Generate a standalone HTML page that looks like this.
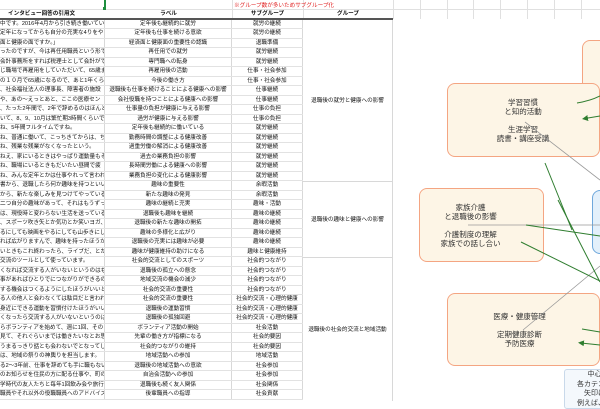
<!DOCTYPE html>
<html><head><meta charset="utf-8"><style>
*{margin:0;padding:0;box-sizing:border-box}
body{width:600px;height:400px;overflow:hidden;background:#fff;position:relative;font-family:"Liberation Sans","Noto Sans CJK JP",sans-serif;color:#111}
.abs{position:absolute}
#rows{position:absolute;left:0;top:19.5px;width:303px}
.r{display:flex;height:9.5px;border-bottom:1px solid #e2e2e2;font-size:5.6px;line-height:9px}
.r div{white-space:nowrap;overflow:hidden;border-right:1px solid #d8d8d8}
.a{width:105px;text-align:left}
.b{width:127px;text-align:center}
.c{width:71px;text-align:center}
.g{position:absolute;left:303px;width:90px;background:#fff;border-right:1px solid #d8d8d8;border-bottom:1px solid #d8d8d8;font-size:5.6px;display:flex;align-items:center;justify-content:center;white-space:nowrap}
.box{position:absolute;background:#fdf5e6;border:1px solid #f4a582;border-radius:8px;font-size:7.5px;color:#333;text-align:center;line-height:9px}
.vl{position:absolute;top:0;height:19px;width:1px;background:#e0e0e0}
</style></head><body>
<div class="abs" style="left:0;top:9px;width:600px;height:1px;background:#e0e0e0"></div>
<div class="vl" style="left:232px"></div><div class="vl" style="left:303px"></div><div class="vl" style="left:393px"></div>
<div class="vl" style="left:420px"></div><div class="vl" style="left:447px"></div><div class="vl" style="left:473px"></div><div class="vl" style="left:500px"></div><div class="vl" style="left:527px"></div><div class="vl" style="left:554px"></div><div class="vl" style="left:581px"></div>
<div class="abs" style="left:104px;top:0;width:1.5px;height:8px;background:#1e8e3e"></div>
<div class="abs" style="left:103px;top:7px;width:3px;height:3px;background:#1e8e3e"></div>
<div class="abs" style="left:234px;top:1px;font-size:5.6px;color:#e02020;white-space:nowrap">※グループ数が多いためサブグループ化</div>
<div class="abs" style="left:0;top:10px;width:393px;height:8px;font-size:5.6px;line-height:8px;font-weight:bold;white-space:nowrap">
<span class="abs" style="left:8px">インタビュー回答の引用文</span>
<span class="abs" style="left:105px;width:127px;text-align:center">ラベル</span>
<span class="abs" style="left:232px;width:71px;text-align:center">サブグループ</span>
<span class="abs" style="left:303px;width:90px;text-align:center">グループ</span>
</div>
<div class="abs" style="left:0;top:18px;width:393px;height:1.5px;background:#555"></div>

<div id="rows">
<div class="r"><div class="a">中です。2016年4月から引き続き働いてい</div><div class="b">定年後も継続的に就労</div><div class="c">就労の継続</div></div>
<div class="r"><div class="a">定年になってからも自分の充実な4りをやき</div><div class="b">定年後も仕事を続ける意欲</div><div class="c">就労の継続</div></div>
<div class="r"><div class="a">面と健康の面ですか。」</div><div class="b">経済面と健康面の重要性の認識</div><div class="c">退職準備</div></div>
<div class="r"><div class="a">ったのですが、今は再任用職員という形で</div><div class="b">再任用での就労</div><div class="c">就労継続</div></div>
<div class="r"><div class="a">会計事務所をすれば税理士として会計ができ</div><div class="b">専門職への転身</div><div class="c">就労継続</div></div>
<div class="r"><div class="a">じ職場で再雇用をしていただいて、65歳ま</div><div class="b">再雇用後の活動</div><div class="c">仕事・社会参加</div></div>
<div class="r"><div class="a">の１０月で65歳になるので、あと1年くらい</div><div class="b">今後の働き方</div><div class="c">仕事・社会参加</div></div>
<div class="r"><div class="a">、社会福祉法人の理事長、障害者の施設</div><div class="b">退職後も仕事を続けることによる健康への影響</div><div class="c">仕事継続</div></div>
<div class="r"><div class="a">や、あの～えっとあと、ここの医療セン</div><div class="b">会社役職を持つことによる健康への影響</div><div class="c">仕事継続</div></div>
<div class="r"><div class="a">、たった2年間で、2年で辞めるのはほんと</div><div class="b">仕事量の負担が健康に与える影響</div><div class="c">仕事の負担</div></div>
<div class="r"><div class="a">いて、8、9、10月は繁忙期3時間くらいで</div><div class="b">過労が健康に与える影響</div><div class="c">仕事の負担</div></div>
<div class="r"><div class="a">ね、5年間フルタイムですね。</div><div class="b">定年後も継続的に働いている</div><div class="c">就労継続</div></div>
<div class="r"><div class="a">ね、普通に働いて、こっちきてからは、ち</div><div class="b">勤務時間の調整による健康改善</div><div class="c">就労継続</div></div>
<div class="r"><div class="a">ね、残業な残業がなくなったという。</div><div class="b">過重労働の解消による健康改善</div><div class="c">就労継続</div></div>
<div class="r"><div class="a">ねえ、家にいるときはやっぱり運動量もそ</div><div class="b">過去の業務負担の影響</div><div class="c">就労継続</div></div>
<div class="r"><div class="a">ね、職場にいるときもだいたい昼間で疲</div><div class="b">長時間労働による健康への影響</div><div class="c">就労継続</div></div>
<div class="r"><div class="a">ね、みんな定年とかは仕事やれって言われ</div><div class="b">業務負担の変化による健康影響</div><div class="c">就労継続</div></div>
<div class="r"><div class="a">書から、退職したら何か趣味を持つといい</div><div class="b">趣味の重要性</div><div class="c">余暇活動</div></div>
<div class="r"><div class="a">から、新たな楽しみを見つけてやっている。</div><div class="b">新たな趣味の発見</div><div class="c">余暇活動</div></div>
<div class="r"><div class="a">二つ自分の趣味があって、それはもうずっと</div><div class="b">趣味の継続と充実</div><div class="c">趣味・活動</div></div>
<div class="r"><div class="a">は、現役時と変わらない生活を送っている。</div><div class="b">退職後も趣味を継続</div><div class="c">趣味の継続</div></div>
<div class="r"><div class="a">、スポーツ吹き矢とか気功とか笑いヨガ、</div><div class="b">退職後の新たな趣味の開拓</div><div class="c">趣味の継続</div></div>
<div class="r"><div class="a">るにしても映画をやるにしても山歩きにし</div><div class="b">趣味の多様化と広がり</div><div class="c">趣味の継続</div></div>
<div class="r"><div class="a">れば広がりますんで、趣味を持ったほうが</div><div class="b">退職後の充実には趣味が必要</div><div class="c">趣味の継続</div></div>
<div class="r"><div class="a">いときもこれ終わったら、ライブだ、とか</div><div class="b">趣味が健康維持の助けになる</div><div class="c">趣味と健康維持</div></div>
<div class="r"><div class="a">交流のツールとして使っています。</div><div class="b">社会的交流としてのスポーツ</div><div class="c">社会的つながり</div></div>
<div class="r"><div class="a">くなれば交流する人がいないというのはも</div><div class="b">退職後の孤立への懸念</div><div class="c">社会的つながり</div></div>
<div class="r"><div class="a">事があればひとりでにつながりができるの</div><div class="b">地域交流の機会の減少</div><div class="c">社会的つながり</div></div>
<div class="r"><div class="a">する機会はつくるようにしたほうがいいと</div><div class="b">社会的交流の重要性</div><div class="c">社会的つながり</div></div>
<div class="r"><div class="a">る人の他人と会わなくては駄目だと言われた</div><div class="b">社会的交流の重要性</div><div class="c">社会的交流・心理的健康</div></div>
<div class="r"><div class="a">身近にできる運動を習慣付けたほうがいい</div><div class="b">退職後の運動習慣</div><div class="c">社会的交流・心理的健康</div></div>
<div class="r"><div class="a">くなったら交流する人がいないというのは</div><div class="b">退職後の孤独回避</div><div class="c">社会的交流・心理的健康</div></div>
<div class="r"><div class="a">らボランティアを始めて、週に1回、その</div><div class="b">ボランティア活動の開始</div><div class="c">社会活動</div></div>
<div class="r"><div class="a">見て、それぐらいまでは働きたいなとお思</div><div class="b">先輩の働き方が指標になる</div><div class="c">社会的要因</div></div>
<div class="r"><div class="a">うまるっきり話とも会わないでとなってし</div><div class="b">社会的つながりの維持</div><div class="c">社会的要因</div></div>
<div class="r"><div class="a">は、地域の祭りの神輿りを担当します。</div><div class="b">地域活動への参加</div><div class="c">地域活動</div></div>
<div class="r"><div class="a">る2～3年前、仕事を辞めても手に職もない</div><div class="b">退職後の地域活動への意欲</div><div class="c">社会参加</div></div>
<div class="r"><div class="a">のお知らせを住民の方に配る仕事や、町の</div><div class="b">自治会活動への参加</div><div class="c">社会参加</div></div>
<div class="r"><div class="a">学時代の友人たちと毎年1回飲み会や旅行</div><div class="b">退職後も続く友人関係</div><div class="c">社会関係</div></div>
<div class="r"><div class="a">職員やそれ以外の役職職員へのアドバイス</div><div class="b">後輩職員への指導</div><div class="c">社会貢献</div></div>
</div>
<div class="g" style="top:19.5px;height:162px">退職後の就労と健康への影響</div>
<div class="g" style="top:181.5px;height:76px">退職後の趣味と健康への影響</div>
<div class="g" style="top:257.5px;height:143px;border-bottom:none">退職後の社会的交流と地域活動</div>

<div class="box" style="left:582px;top:40px;width:40px;height:80px"></div>
<div class="box" style="left:447px;top:83px;width:153px;height:74px;padding-top:14px">
<div style="margin-left:-1px;width:152px">学習習慣<br>と知的活動<br><br>生涯学習<br>読書・講座受講</div></div>
<div class="box" style="left:592px;top:190px;width:30px;height:64px;background:#e3f0fb;border-color:#6fa8dc"></div>
<div class="box" style="left:419px;top:188px;width:125px;height:74px;padding-top:14px">
<div style="margin-left:-22px">家族介護<br>と退職後の影響<br><br>介護制度の理解<br>家族での話し合い</div></div>
<div class="box" style="left:447px;top:293px;width:153px;height:73px;padding-top:18px">
<div style="margin-left:-8px">医療・健康管理<br><br>定期健康診断<br>予防医療</div></div>
<div class="box" style="left:564px;top:369px;width:70px;height:40px;background:#f4f8fc;border-color:#c9d9ea;border-radius:3px;font-size:7px;line-height:9.5px;padding-top:0">
<div style="margin-left:-9px;white-space:nowrap">中心<br>各カテゴリ<br>矢印は<br>例えば、経</div></div>
<svg class="abs" style="left:0;top:0" width="600" height="400" viewBox="0 0 600 400">
<defs><marker id="ar" markerWidth="6" markerHeight="6" refX="3" refY="3" orient="auto"><path d="M0,0 L6,3 L0,6 z" fill="#2f7d2f"/></marker></defs>
<g stroke="#999" stroke-width="0.8" fill="none">
<line x1="525" y1="122" x2="600" y2="180"/>
<line x1="468" y1="225" x2="600" y2="225"/>
<line x1="523" y1="330" x2="600" y2="266"/>
</g>
<g stroke="#2f7d2f" stroke-width="1" fill="none">
<path d="M577,103 Q590,101 600,96"/>
<line x1="600" y1="116" x2="585" y2="118.5" marker-end="url(#ar)"/>
<line x1="545" y1="163" x2="572" y2="230"/>
<line x1="558" y1="200" x2="600" y2="282"/>
<line x1="526" y1="225" x2="600" y2="236"/>
<line x1="521" y1="242" x2="600" y2="281"/>
<line x1="582" y1="329" x2="600" y2="332"/>
<line x1="600" y1="345" x2="581" y2="343" marker-end="url(#ar)"/>
</g>
</svg>
</body></html>
